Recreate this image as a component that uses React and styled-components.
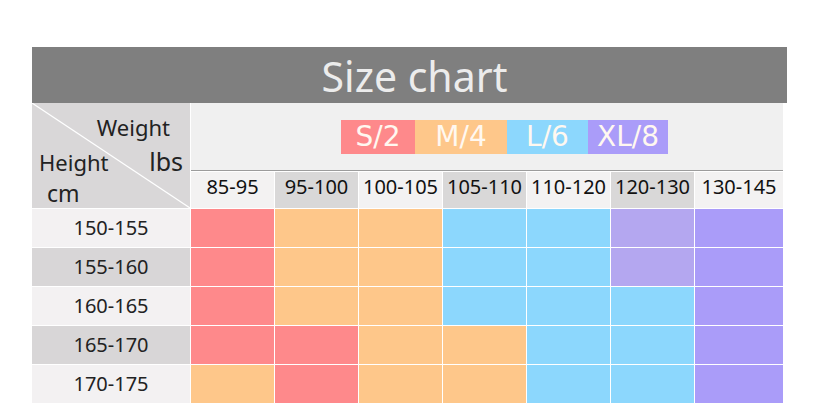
import React from 'react';
import styled, { createGlobalStyle } from 'styled-components';

const colors = {
    R: '#fe898b',
    O: '#fec78a',
    B: '#8cd7fd',
    L: '#b4a7f0',
    P: '#aa9cf9',
};

const weights = ['85-95', '95-100', '100-105', '105-110', '110-120', '120-130', '130-145'];

const rows = [
    { h: '150-155', cells: 'ROOBBLP' },
    { h: '155-160', cells: 'ROOBBLP' },
    { h: '160-165', cells: 'ROOBBBP' },
    { h: '165-170', cells: 'RROOBBP' },
    { h: '170-175', cells: 'OROOBBP' },
];

const legend = [
    { label: 'S/2', c: 'R', w: 74 },
    { label: 'M/4', c: 'O', w: 92 },
    { label: 'L/6', c: 'B', w: 81 },
    { label: 'XL/8', c: 'P', w: 80 },
];

const App = () => {
    return (
        <>
            <GlobalStyle />
            <StyledChart>
                <StyledTitle>Size chart</StyledTitle>
                <StyledTable>
                    <StyledCorner>
                        <svg viewBox="0 0 158 105" preserveAspectRatio="none">
                            <line x1="0" y1="0" x2="158" y2="105" stroke="#fff" strokeWidth="1.2" />
                        </svg>
                        <CornerLabel $align="end" $pad="0 20px 0 0">Weight</CornerLabel>
                        <CornerLine>
                            <span>Height</span>
                            <Unit>lbs</Unit>
                        </CornerLine>
                        <CornerLabel $pad="0 0 0 15px" $size="23px">cm</CornerLabel>
                    </StyledCorner>
                    <StyledLegendArea>
                        {legend.map((l) => (
                            <LegendTag key={l.label} $bg={colors[l.c]} $w={l.w}>
                                {l.label}
                            </LegendTag>
                        ))}
                    </StyledLegendArea>
                    {weights.map((w, i) => (
                        <WeightCell key={w} $dark={i % 2 === 1}>{w}</WeightCell>
                    ))}
                    {rows.map((r, ri) => (
                        <React.Fragment key={r.h}>
                            <HeightCell $dark={ri % 2 === 1}>{r.h}</HeightCell>
                            {r.cells.split('').map((c, ci) => (
                                <SizeCell key={ci} $bg={colors[c]} />
                            ))}
                        </React.Fragment>
                    ))}
                </StyledTable>
            </StyledChart>
        </>
    );
};

const GlobalStyle = createGlobalStyle`
    body {
        margin: 0;
        background: #fff;
        font-family: "Noto Sans", "DejaVu Sans", sans-serif;
    }
`;

const StyledChart = styled.div`
    width: 755px;
    margin: 47px 0 0 32px;
`;

const StyledTitle = styled.div`
    height: 56px;
    background: #7f7f7f;
    color: #ececec;
    font-size: 41px;
    line-height: 56px;
    padding: 1px 0 0 10px;
    box-sizing: border-box;
    text-align: center;
`;

const StyledTable = styled.div`
    width: 751px;
    display: grid;
    grid-template-columns: 158px repeat(6, 83px) 1fr;
    grid-template-rows: 68px 36px repeat(5, 38px);
    gap: 1px;
    background: #fff;
`;

const StyledCorner = styled.div`
    grid-row: 1 / 3;
    position: relative;
    background: #d9d7d8;
    display: flex;
    flex-direction: column;
    padding-top: 11px;
    color: #222;
    font-size: 22px;
    line-height: 26px;
    > svg {
        position: absolute;
        inset: 0;
        width: 100%;
        height: 100%;
    }
`;

const CornerLabel = styled.div`
    position: relative;
    align-self: ${(p) => (p.$align === 'end' ? 'flex-end' : 'flex-start')};
    padding: ${(p) => p.$pad};
    font-size: ${(p) => p.$size || '22px'};
    margin-top: ${(p) => (p.$size ? '5px' : '0')};
`;

const CornerLine = styled.div`
    position: relative;
    display: flex;
    justify-content: space-between;
    align-items: baseline;
    padding: 0 7px 0 7px;
    margin-top: 8px;
`;

const Unit = styled.span`
    font-size: 25px;
`;

const StyledLegendArea = styled.div`
    grid-column: 2 / -1;
    background: #f0f0f0;
    border-bottom: 1px solid #9c9c9c;
    display: flex;
    align-items: flex-start;
    padding: 17px 0 0 150px;
`;

const LegendTag = styled.div`
    width: ${(p) => p.$w}px;
    height: 34px;
    background: ${(p) => p.$bg};
    color: #fff8f0;
    font-family: "DejaVu Sans", sans-serif;
    font-size: 28px;
    line-height: 34px;
    text-align: center;
`;

const WeightCell = styled.div`
    background: ${(p) => (p.$dark ? '#d9d8d8' : '#f3f2f2')};
    color: #111;
    font-size: 20px;
    line-height: 30px;
    text-align: center;
`;

const HeightCell = styled.div`
    background: ${(p) => (p.$dark ? '#d8d6d7' : '#f3f1f2')};
    color: #222;
    font-size: 20px;
    line-height: 38px;
    text-align: center;
`;

const SizeCell = styled.div`
    background: ${(p) => p.$bg};
`;

export default App;
